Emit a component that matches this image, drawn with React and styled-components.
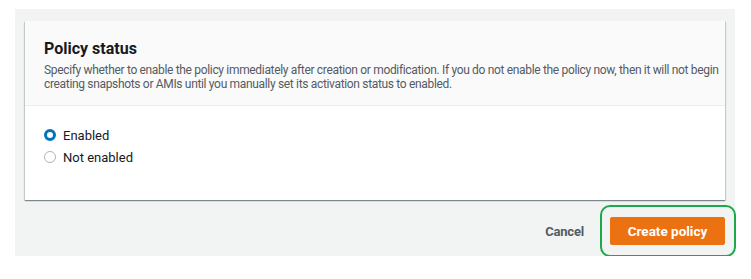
import React from "react";
import styled, { createGlobalStyle } from "styled-components";

const GlobalStyle = createGlobalStyle`
  body {
    margin: 0;
    background: #ffffff;
    font-family: Roboto, "Open Sans", sans-serif;
    color: #16191f;
  }
`;

const options = [
  { id: "enabled", label: "Enabled" },
  { id: "disabled", label: "Not enabled" },
];

export default function App() {
  const [status, setStatus] = React.useState("enabled");

  return (
    <>
      <GlobalStyle />
      <Page>
        <Form>
          <Panel>
            <PanelHeader>
              <Title>Policy status</Title>
              <Description>
                Specify whether to enable the policy immediately after creation
                or modification. If you do not enable the policy now, then it
                will not begin creating snapshots or AMIs until you manually set
                its activation status to enabled.
              </Description>
            </PanelHeader>
            <PanelBody>
              {options.map((option) => (
                <RadioRow key={option.id} onClick={() => setStatus(option.id)}>
                  <RadioDot checked={status === option.id} />
                  <RadioLabel>{option.label}</RadioLabel>
                </RadioRow>
              ))}
            </PanelBody>
          </Panel>
          <Footer>
            <LinkButton>Cancel</LinkButton>
            <Highlight>
              <PrimaryButton>Create policy</PrimaryButton>
            </Highlight>
          </Footer>
        </Form>
      </Page>
    </>
  );
}

const Page = styled.div`
  padding: 9px 16px 0 15px;
`;

const Form = styled.div`
  background: #f2f3f3;
  padding: 12px 10px 11px 10px;
`;

const Panel = styled.div`
  background: #ffffff;
  box-shadow: 0 1px 1px 0 rgba(0, 28, 36, 0.3),
    1px 1px 1px 0 rgba(0, 28, 36, 0.15), -1px 1px 1px 0 rgba(0, 28, 36, 0.15);
`;

const PanelHeader = styled.div`
  background: #fafafa;
  border-bottom: 1px solid #eaeded;
  padding: 17px 2px 14px 19px;
`;

const Title = styled.h2`
  margin: 0;
  font-size: 16px;
  line-height: 22px;
  font-weight: 700;
  color: #16191f;
`;

const Description = styled.p`
  margin: 3px 0 0;
  font-size: 12px;
  line-height: 14px;
  letter-spacing: -0.33px;
  color: #545b64;
`;

const PanelBody = styled.div`
  padding: 20px 19px 34px 19px;
  display: flex;
  flex-direction: column;
  gap: 4px;
`;

const RadioRow = styled.label`
  display: flex;
  align-items: center;
  gap: 7px;
  height: 18px;
  cursor: pointer;
`;

const RadioDot = styled.span`
  width: 12px;
  height: 12px;
  box-sizing: border-box;
  border-radius: 50%;
  border: ${(p) => (p.checked ? "3.5px solid #0073bb" : "1px solid #aab7b8")};
  background: #ffffff;
  flex-shrink: 0;
`;

const RadioLabel = styled.span`
  font-size: 13px;
  color: #16191f;
`;

const Footer = styled.div`
  display: flex;
  justify-content: flex-end;
  align-items: center;
  gap: 18px;
  margin-top: 17px;
`;

const LinkButton = styled.button`
  border: none;
  background: none;
  font-family: inherit;
  font-size: 13px;
  font-weight: 700;
  letter-spacing: -0.2px;
  color: #545b64;
  padding: 4px 8px;
  cursor: pointer;
`;

const Highlight = styled.div`
  position: relative;
  &::after {
    content: "";
    position: absolute;
    inset: -12px -11px -12px -10px;
    border: 2px solid #1ba94c;
    border-radius: 10px;
    pointer-events: none;
  }
`;

const PrimaryButton = styled.button`
  display: block;
  width: 115px;
  height: 28px;
  border: 1px solid #ec7211;
  border-radius: 2px;
  background: #ec7211;
  color: #ffffff;
  font-family: inherit;
  font-size: 13.5px;
  font-weight: 700;
  cursor: pointer;
`;
